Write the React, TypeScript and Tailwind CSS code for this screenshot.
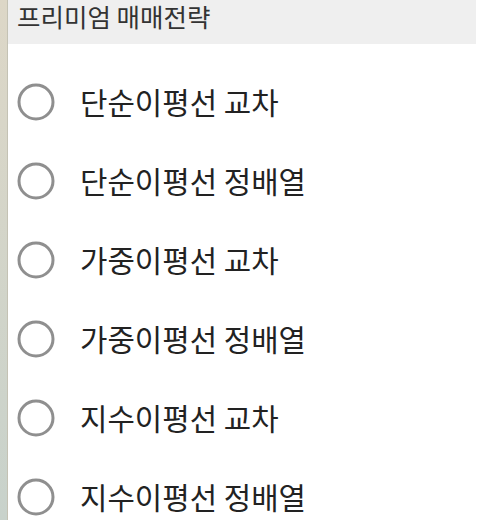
const items = [
  '단순이평선 교차',
  '단순이평선 정배열',
  '가중이평선 교차',
  '가중이평선 정배열',
  '지수이평선 교차',
  '지수이평선 정배열',
];

function RadioCircle() {
  return (
    <svg width="38" height="38" viewBox="0 0 38 38" className="shrink-0">
      <circle cx="19" cy="19" r="17" fill="none" stroke="#8f8f8f" strokeWidth="3" />
    </svg>
  );
}

export default function App() {
  return (
    <div
      className="flex h-[520px] w-[486px] overflow-hidden bg-white"
      style={{ fontFamily: '"Noto Sans CJK KR", "Noto Sans", sans-serif' }}
    >
      <div className="w-[8px] shrink-0 border-r border-[#c4c2b4] bg-gradient-to-b from-[#ddd7c7] to-[#c8d2cb]" />
      <div className="flex w-[468px] shrink-0 flex-col">
        <div className="flex h-[44px] shrink-0 items-start bg-[#efefef] pl-[9px] pt-[1px]">
          <span className="text-[25.5px] leading-[30px] text-[#333]">프리미엄 매매전략</span>
        </div>
        <div className="flex shrink-0 flex-col pt-[18px]">
          {items.map((label) => (
            <div key={label} className="flex h-[79px] shrink-0 items-center pl-[9px]">
              <RadioCircle />
              <span className="ml-[25px] text-[29.8px] text-[#222]">{label}</span>
            </div>
          ))}
        </div>
      </div>
    </div>
  );
}
